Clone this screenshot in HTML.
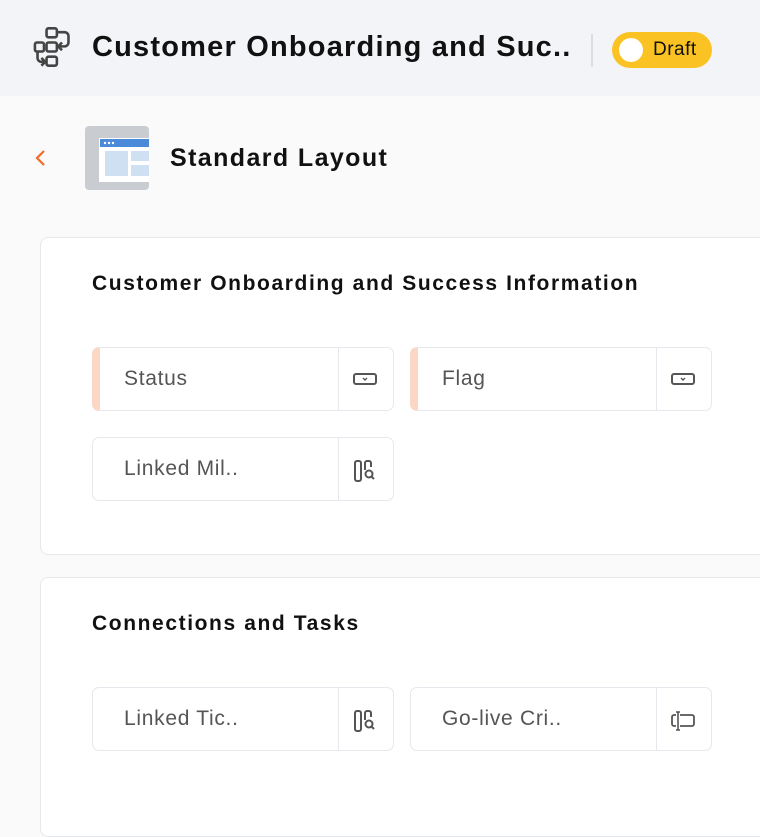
<!DOCTYPE html>
<html><head><style>
*{box-sizing:border-box;margin:0;padding:0}
body{width:760px;height:788px;overflow:hidden;background:#fafafa;font-family:"Liberation Sans",sans-serif;position:relative}
.hdr{position:absolute;left:0;top:0;width:760px;height:96px;background:#f3f4f8}
.title{position:absolute;left:92px;top:31px;font-size:29px;font-weight:bold;color:#111;letter-spacing:1.2px;white-space:nowrap}
.sep{position:absolute;left:591px;top:34px;width:2px;height:33px;background:#dcdde2}
.draft{position:absolute;left:612px;top:32px;width:100px;height:36px;border-radius:18px;background:#fbc224}
.draft .k{position:absolute;left:7px;top:6px;width:24px;height:24px;border-radius:50%;background:#fff}
.draft span{position:absolute;left:41px;top:7px;font-size:19px;color:#111;letter-spacing:0.5px}
.back{position:absolute;left:34px;top:148px}
.lay{position:absolute;left:85px;top:126px}
.lt{position:absolute;left:170px;top:144px;font-size:25px;font-weight:bold;color:#111;letter-spacing:1.4px}
.card{position:absolute;left:40px;width:740px;background:#fff;border:1.5px solid #e6e8ee;border-radius:8px}
.ch{position:absolute;font-size:21px;font-weight:bold;color:#111;letter-spacing:1.6px;white-space:nowrap}
.f{position:absolute;width:302px;height:64px;border:1.5px solid #e6e8ee;border-radius:7px;background:#fff;overflow:hidden}
.f.req{border-left:8px solid #fdd7c5}
.f .l{position:absolute;left:31px;top:19px;font-size:21px;color:#555;letter-spacing:0.7px}
.f.req .l{left:24px}
.f .d{position:absolute;right:54px;top:0;width:1.5px;height:100%;background:#e6e8ee}
.f svg{position:absolute;right:15px;top:21px}
</style></head><body>
<div class="hdr">
<svg style="position:absolute;left:33px;top:27px" width="40" height="40" viewBox="1 1 30 31" fill="none" stroke="#444" stroke-width="2" stroke-linejoin="round">
<rect x="11" y="2" width="8" height="7" rx="1.5"/><rect x="11" y="13" width="8" height="7" rx="1.5"/><rect x="11" y="24" width="8" height="7" rx="1.5"/>
<rect x="2" y="13" width="7" height="7" rx="1.5"/>
<path d="M19 5h6a3 3 0 0 1 3 3v5a3 3 0 0 1-3 3h-4"/><path d="M23 13l-3 3 3 3"/>
<path d="M4 20v5a3 3 0 0 0 3 3h3"/><path d="M7 25l3 3-3 3"/>
</svg>
<div class="title">Customer Onboarding and Suc..</div>
<div class="sep"></div>
<div class="draft"><div class="k"></div><span>Draft</span></div>
</div>
<svg class="back" width="14" height="20" viewBox="0 0 14 20"><path d="M10 3L3 10l7 7" fill="none" stroke="#f26a2a" stroke-width="2.2"/></svg>
<svg class="lay" width="64" height="64" viewBox="0 0 64 64">
<rect x="0" y="0" width="64" height="64" rx="4" fill="#c9cdd2"/>
<rect x="14" y="12" width="50" height="44" fill="#fff"/>
<rect x="15" y="13" width="49" height="8" fill="#4a8ad9"/>
<circle cx="20" cy="17" r="1.2" fill="#fff"/><circle cx="24" cy="17" r="1.2" fill="#fff"/><circle cx="28" cy="17" r="1.2" fill="#fff"/>
<rect x="20" y="25" width="23" height="25" fill="#cfe0f2"/>
<rect x="46" y="25" width="18" height="10" fill="#cfe0f2"/>
<rect x="46" y="39" width="18" height="11" fill="#cfe0f2"/>
</svg>
<div class="lt">Standard Layout</div>

<div class="card" style="top:237px;height:318px"></div>
<div class="ch" style="left:92px;top:272px">Customer Onboarding and Success Information</div>
<div class="f req" style="left:92px;top:347px"><div class="l">Status</div><div class="d"></div>
<svg width="26" height="20" viewBox="0 0 26 20"><rect x="2" y="5" width="22" height="10" rx="2" fill="none" stroke="#555" stroke-width="2"/><path d="M11 9l2 2 2-2" fill="none" stroke="#555" stroke-width="1.4"/></svg></div>
<div class="f req" style="left:410px;top:347px"><div class="l">Flag</div><div class="d"></div>
<svg width="26" height="20" viewBox="0 0 26 20"><rect x="2" y="5" width="22" height="10" rx="2" fill="none" stroke="#555" stroke-width="2"/><path d="M11 9l2 2 2-2" fill="none" stroke="#555" stroke-width="1.4"/></svg></div>
<div class="f" style="left:92px;top:437px"><div class="l">Linked Mil..</div><div class="d"></div>
<svg width="26" height="24" viewBox="0 0 26 24"><rect x="3" y="2" width="6" height="20" rx="2" fill="none" stroke="#555" stroke-width="2"/><path d="M13 11V4a2 2 0 0 1 2-2h2a2 2 0 0 1 2 2v4" fill="none" stroke="#555" stroke-width="2"/><circle cx="17" cy="15" r="3.5" fill="none" stroke="#555" stroke-width="2"/><path d="M19.5 17.5L22 20" stroke="#555" stroke-width="2"/></svg></div>

<div class="card" style="top:577px;height:260px"></div>
<div class="ch" style="left:92px;top:612px">Connections and Tasks</div>
<div class="f" style="left:92px;top:687px"><div class="l">Linked Tic..</div><div class="d"></div>
<svg width="26" height="24" viewBox="0 0 26 24"><rect x="3" y="2" width="6" height="20" rx="2" fill="none" stroke="#555" stroke-width="2"/><path d="M13 11V4a2 2 0 0 1 2-2h2a2 2 0 0 1 2 2v4" fill="none" stroke="#555" stroke-width="2"/><circle cx="17" cy="15" r="3.5" fill="none" stroke="#555" stroke-width="2"/><path d="M19.5 17.5L22 20" stroke="#555" stroke-width="2"/></svg></div>
<div class="f" style="left:410px;top:687px"><div class="l">Go-live Cri..</div><div class="d"></div>
<svg width="26" height="24" viewBox="0 0 26 24"><path d="M6 6H4a2 2 0 0 0-2 2v7a2 2 0 0 0 2 2h2M10 6h12a2 2 0 0 1 2 2v7a2 2 0 0 1-2 2H10" fill="none" stroke="#555" stroke-width="1.8"/><path d="M8 3v18M6 3h4M6 21h4" stroke="#555" stroke-width="1.6"/></svg></div>
</body></html>
